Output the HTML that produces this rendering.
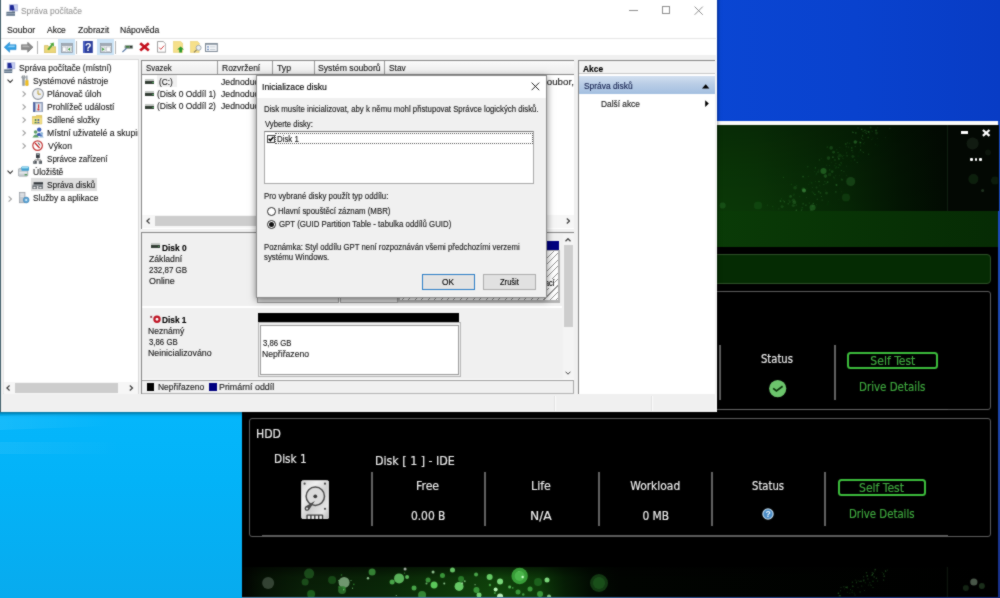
<!DOCTYPE html>
<html lang="cs"><head><meta charset="utf-8"><title>Správa počítače</title>
<style>
html,body{margin:0;padding:0}
body{width:1000px;height:598px;overflow:hidden;position:relative;background:#04b4f9;font-family:"Liberation Sans",sans-serif}
.a{position:absolute}
#win,#app{filter:url(#soft)}
.layer{position:absolute;left:0;top:0;width:1000px;height:598px}
.t{position:absolute;white-space:nowrap;line-height:1;transform-origin:0 50%}
#win .t{-webkit-text-stroke:.14px currentColor}
#app .t{-webkit-text-stroke:.15px currentColor}
.sep{position:absolute;width:2px;background:#626262}
</style></head><body>
<svg width="0" height="0" style="position:absolute"><defs><filter id="soft" x="0" y="0" width="100%" height="100%" color-interpolation-filters="sRGB"><feConvolveMatrix order="3" kernelMatrix="1 2 1 2 16 2 1 2 1" divisor="28" edgeMode="duplicate" preserveAlpha="false"/></filter></defs></svg>

<!-- ================= desktop background ================= -->
<div class="layer" id="bg">
 <div class="a" style="left:0;top:400px;width:244px;height:198px;background:linear-gradient(180deg,#05b7fc 0%,#03b3f8 40%,#08abee 100%)"></div>
 <div class="a" style="left:0;top:414px;width:110px;height:14px;background:linear-gradient(90deg,rgba(255,255,255,.07),rgba(255,255,255,0));transform:skewY(-2deg)"></div>
 <div class="a" style="left:0;top:442px;width:120px;height:12px;background:linear-gradient(90deg,rgba(255,255,255,.06),rgba(255,255,255,0))"></div>
 <div class="a" style="left:710px;top:0;width:290px;height:130px;background:linear-gradient(90deg,#0a46d3 0%,#0942ce 50%,#083cc5 100%)"></div>
 <div class="a" style="left:996px;top:121px;width:4px;height:477px;background:linear-gradient(180deg,#1a4cc0,#1c46ac 60%,#182f88)"></div>
 <div class="a" style="left:242px;top:594px;width:758px;height:4px;background:linear-gradient(90deg,#5a86ad 0%,#4f7aa6 40%,#2f4f90 60%,#1a2f80 100%)"></div>
</div>

<!-- ================= dark SSD toolbox app ================= -->
<div class="layer" id="app">
 <div class="a" style="left:242px;top:121px;width:756px;height:475.7px;background:#000"></div>
 <div class="a" style="left:242px;top:121px;width:756px;height:4.4px;background:#fbfbfb"></div>
 <!-- header -->
 <div class="a" style="left:242px;top:125px;width:756px;height:86px;background:linear-gradient(180deg,rgba(0,0,0,.22) 0%,rgba(0,0,0,.08) 55%,rgba(0,0,0,0) 100%),linear-gradient(90deg,#0b3b08 0%,#0a3907 62%,#0a3507 68%,#082d06 74%,#062405 80.5%,#031503 87%,#020b02 93%,#010601 100%)"></div>
 <div class="a" style="left:947px;top:125px;width:51px;height:86px;background:#030803;border-left:1px solid #0f1f10"></div>
 <svg class="a" style="left:242px;top:125.5px" width="756" height="86" viewBox="0 0 756 86"><defs><filter id="bl2" x="-5%" y="-10%" width="110%" height="120%"><feGaussianBlur stdDeviation=".45"/></filter></defs><g filter="url(#bl2)"><circle cx="581.5" cy="45.1" r="3" fill="#2f7a2f" fill-opacity="0.6"/><circle cx="608.7" cy="55.5" r="4.5" fill="#1f5a1f" fill-opacity="0.55"/><circle cx="562.0" cy="64.5" r="2" fill="#3f8a3f" fill-opacity="0.7"/><circle cx="480.6" cy="79.5" r="3" fill="#1f5a1f" fill-opacity="0.7"/><circle cx="516.0" cy="79.5" r="4" fill="#164f12" fill-opacity="0.6"/><circle cx="570.6" cy="81.5" r="3" fill="#2a6a2a" fill-opacity="0.6"/><circle cx="604.0" cy="71.5" r="4" fill="#124410" fill-opacity="0.6"/><circle cx="730.6" cy="17.5" r="6" fill="#2a3a2a" fill-opacity="0.4"/><circle cx="731.4" cy="53.1" r="5" fill="#1a3a1a" fill-opacity="0.45"/><circle cx="740.6" cy="64.5" r="1.5" fill="#3a5a3a" fill-opacity="0.5"/><circle cx="753.0" cy="54.5" r="4" fill="#1a3a1a" fill-opacity="0.4"/><circle cx="746.0" cy="26.5" r="3" fill="#141f14" fill-opacity="0.5"/><circle cx="634.0" cy="4.5" r="0.9" fill="#358535" fill-opacity="0.43"/><circle cx="581.8" cy="58.6" r="0.7" fill="#358535" fill-opacity="0.3"/><circle cx="594.5" cy="59.0" r="0.9" fill="#3d8f3d" fill-opacity="0.46"/><circle cx="575.3" cy="73.3" r="0.4" fill="#358535" fill-opacity="0.23"/><circle cx="596.9" cy="32.9" r="0.9" fill="#358535" fill-opacity="0.37"/><circle cx="573.4" cy="42.0" r="0.7" fill="#225f22" fill-opacity="0.48"/><circle cx="563.9" cy="79.1" r="0.7" fill="#3d8f3d" fill-opacity="0.5"/><circle cx="630.2" cy="5.3" r="0.5" fill="#2a702a" fill-opacity="0.41"/><circle cx="594.9" cy="23.7" r="0.5" fill="#2a702a" fill-opacity="0.37"/><circle cx="596.3" cy="41.5" r="0.7" fill="#225f22" fill-opacity="0.45"/><circle cx="591.6" cy="26.2" r="1.4" fill="#225f22" fill-opacity="0.54"/><circle cx="570.8" cy="80.6" r="0.7" fill="#225f22" fill-opacity="0.34"/><circle cx="561.2" cy="77.7" r="0.9" fill="#225f22" fill-opacity="0.53"/><circle cx="624.4" cy="7.5" r="0.6" fill="#358535" fill-opacity="0.37"/><circle cx="552.4" cy="76.4" r="1.8" fill="#3d8f3d" fill-opacity="0.31"/><circle cx="615.4" cy="15.4" r="0.4" fill="#225f22" fill-opacity="0.46"/><circle cx="585.9" cy="78.1" r="0.6" fill="#225f22" fill-opacity="0.33"/><circle cx="612.8" cy="33.9" r="0.7" fill="#225f22" fill-opacity="0.5"/><circle cx="621.3" cy="26.2" r="0.5" fill="#358535" fill-opacity="0.54"/><circle cx="587.7" cy="43.9" r="0.7" fill="#2a702a" fill-opacity="0.48"/><circle cx="604.7" cy="49.2" r="0.4" fill="#2a702a" fill-opacity="0.53"/><circle cx="592.9" cy="34.0" r="0.7" fill="#2a702a" fill-opacity="0.52"/><circle cx="591.7" cy="50.9" r="0.6" fill="#225f22" fill-opacity="0.34"/><circle cx="597.8" cy="21.4" r="0.5" fill="#2a702a" fill-opacity="0.27"/><circle cx="546.3" cy="77.6" r="0.7" fill="#3d8f3d" fill-opacity="0.25"/><circle cx="622.0" cy="18.8" r="0.5" fill="#225f22" fill-opacity="0.29"/><circle cx="599.4" cy="44.6" r="0.7" fill="#358535" fill-opacity="0.33"/><circle cx="610.8" cy="30.5" r="1.4" fill="#358535" fill-opacity="0.23"/><circle cx="541.6" cy="80.6" r="0.6" fill="#2a702a" fill-opacity="0.24"/><circle cx="597.8" cy="29.4" r="1.8" fill="#2a702a" fill-opacity="0.23"/><circle cx="571.3" cy="77.4" r="0.7" fill="#358535" fill-opacity="0.47"/><circle cx="626.7" cy="28.3" r="0.7" fill="#2a702a" fill-opacity="0.39"/><circle cx="547.8" cy="76.0" r="0.6" fill="#3d8f3d" fill-opacity="0.44"/><circle cx="630.8" cy="12.1" r="0.7" fill="#225f22" fill-opacity="0.28"/><circle cx="592.1" cy="51.8" r="0.6" fill="#358535" fill-opacity="0.37"/><circle cx="612.2" cy="30.6" r="0.6" fill="#2a702a" fill-opacity="0.21"/><circle cx="584.7" cy="39.1" r="0.7" fill="#225f22" fill-opacity="0.28"/><circle cx="624.1" cy="7.0" r="0.5" fill="#2a702a" fill-opacity="0.48"/><circle cx="561.3" cy="63.2" r="1.8" fill="#358535" fill-opacity="0.28"/><circle cx="613.3" cy="16.0" r="1.8" fill="#358535" fill-opacity="0.51"/><circle cx="594.5" cy="41.0" r="0.7" fill="#2a702a" fill-opacity="0.27"/><circle cx="554.3" cy="84.3" r="0.7" fill="#3d8f3d" fill-opacity="0.51"/><circle cx="553.1" cy="61.8" r="1.8" fill="#358535" fill-opacity="0.26"/><circle cx="554.2" cy="79.0" r="0.7" fill="#225f22" fill-opacity="0.54"/><circle cx="598.1" cy="39.1" r="0.7" fill="#2a702a" fill-opacity="0.4"/><circle cx="551.8" cy="69.7" r="0.7" fill="#2a702a" fill-opacity="0.22"/><circle cx="574.7" cy="47.2" r="0.6" fill="#3d8f3d" fill-opacity="0.21"/><circle cx="604.2" cy="29.1" r="0.4" fill="#3d8f3d" fill-opacity="0.22"/><circle cx="551.1" cy="79.6" r="1.4" fill="#225f22" fill-opacity="0.46"/><circle cx="584.2" cy="57.6" r="0.9" fill="#2a702a" fill-opacity="0.21"/><circle cx="589.1" cy="21.9" r="1.8" fill="#225f22" fill-opacity="0.52"/><circle cx="575.2" cy="73.2" r="0.6" fill="#358535" fill-opacity="0.41"/><circle cx="600.1" cy="31.8" r="0.4" fill="#358535" fill-opacity="0.34"/><circle cx="607.5" cy="17.3" r="0.9" fill="#225f22" fill-opacity="0.26"/><circle cx="599.3" cy="37.7" r="0.5" fill="#2a702a" fill-opacity="0.35"/><circle cx="559.4" cy="84.1" r="0.7" fill="#358535" fill-opacity="0.46"/><circle cx="557.8" cy="70.7" r="0.6" fill="#225f22" fill-opacity="0.4"/><circle cx="599.9" cy="29.5" r="0.5" fill="#358535" fill-opacity="0.25"/><circle cx="547.0" cy="74.0" r="0.5" fill="#358535" fill-opacity="0.43"/><circle cx="620.6" cy="9.3" r="0.5" fill="#3d8f3d" fill-opacity="0.52"/><circle cx="626.7" cy="5.9" r="0.9" fill="#358535" fill-opacity="0.53"/><circle cx="608.0" cy="28.9" r="0.4" fill="#2a702a" fill-opacity="0.42"/><circle cx="570.7" cy="61.7" r="0.4" fill="#358535" fill-opacity="0.55"/><circle cx="570.2" cy="66.0" r="0.9" fill="#225f22" fill-opacity="0.23"/><circle cx="619.8" cy="3.3" r="0.7" fill="#358535" fill-opacity="0.42"/><circle cx="629.9" cy="13.5" r="0.6" fill="#225f22" fill-opacity="0.35"/><circle cx="615.1" cy="36.5" r="0.5" fill="#3d8f3d" fill-opacity="0.45"/><circle cx="633.5" cy="18.1" r="0.4" fill="#3d8f3d" fill-opacity="0.4"/><circle cx="601.9" cy="29.4" r="0.5" fill="#3d8f3d" fill-opacity="0.23"/><circle cx="569.8" cy="56.8" r="0.6" fill="#358535" fill-opacity="0.38"/><circle cx="568.6" cy="82.1" r="0.5" fill="#225f22" fill-opacity="0.24"/><circle cx="570.8" cy="80.0" r="0.7" fill="#2a702a" fill-opacity="0.52"/><circle cx="583.4" cy="51.1" r="0.5" fill="#3d8f3d" fill-opacity="0.42"/><circle cx="603.7" cy="18.0" r="0.9" fill="#358535" fill-opacity="0.33"/><circle cx="621.2" cy="17.4" r="0.4" fill="#2a702a" fill-opacity="0.43"/><circle cx="596.0" cy="30.9" r="0.6" fill="#3d8f3d" fill-opacity="0.31"/><circle cx="603.7" cy="24.1" r="0.5" fill="#2a702a" fill-opacity="0.2"/><circle cx="590.2" cy="46.2" r="0.7" fill="#2a702a" fill-opacity="0.22"/><circle cx="589.4" cy="36.4" r="0.4" fill="#2a702a" fill-opacity="0.42"/><circle cx="601.9" cy="45.6" r="0.5" fill="#2a702a" fill-opacity="0.5"/><circle cx="546.1" cy="77.9" r="0.7" fill="#225f22" fill-opacity="0.53"/><circle cx="569.2" cy="84.4" r="1.4" fill="#225f22" fill-opacity="0.41"/><circle cx="604.6" cy="26.9" r="0.7" fill="#358535" fill-opacity="0.29"/><circle cx="531.6" cy="83.1" r="0.5" fill="#225f22" fill-opacity="0.33"/><circle cx="604.3" cy="20.7" r="0.6" fill="#3d8f3d" fill-opacity="0.26"/><circle cx="579.4" cy="70.5" r="0.6" fill="#3d8f3d" fill-opacity="0.39"/><circle cx="587.6" cy="48.5" r="1.8" fill="#225f22" fill-opacity="0.29"/><circle cx="536.8" cy="82.9" r="0.7" fill="#358535" fill-opacity="0.26"/><circle cx="593.8" cy="65.9" r="0.9" fill="#225f22" fill-opacity="0.46"/><circle cx="571.7" cy="67.3" r="0.7" fill="#225f22" fill-opacity="0.51"/><circle cx="621.9" cy="17.5" r="0.4" fill="#225f22" fill-opacity="0.31"/><circle cx="576.4" cy="44.1" r="0.5" fill="#358535" fill-opacity="0.33"/><circle cx="564.4" cy="71.5" r="0.5" fill="#3d8f3d" fill-opacity="0.23"/><circle cx="593.8" cy="49.7" r="0.6" fill="#2a702a" fill-opacity="0.22"/><circle cx="578.5" cy="66.9" r="0.9" fill="#3d8f3d" fill-opacity="0.29"/><circle cx="574.4" cy="78.6" r="0.5" fill="#358535" fill-opacity="0.22"/><circle cx="584.5" cy="67.1" r="1.4" fill="#3d8f3d" fill-opacity="0.27"/><circle cx="563.5" cy="51.9" r="0.5" fill="#225f22" fill-opacity="0.22"/><circle cx="599.7" cy="53.5" r="0.9" fill="#2a702a" fill-opacity="0.33"/><circle cx="599.0" cy="36.8" r="0.5" fill="#358535" fill-opacity="0.55"/><circle cx="606.6" cy="21.1" r="0.6" fill="#2a702a" fill-opacity="0.29"/><circle cx="566.4" cy="50.3" r="0.6" fill="#225f22" fill-opacity="0.42"/><circle cx="629.4" cy="4.7" r="0.5" fill="#225f22" fill-opacity="0.27"/><circle cx="590.9" cy="31.2" r="0.9" fill="#3d8f3d" fill-opacity="0.37"/><circle cx="590.2" cy="45.6" r="1.4" fill="#225f22" fill-opacity="0.48"/><circle cx="587.3" cy="31.1" r="0.4" fill="#2a702a" fill-opacity="0.24"/><circle cx="598.0" cy="62.7" r="0.4" fill="#2a702a" fill-opacity="0.25"/><circle cx="582.8" cy="55.6" r="0.9" fill="#225f22" fill-opacity="0.27"/><circle cx="530.8" cy="80.4" r="0.7" fill="#2a702a" fill-opacity="0.29"/><circle cx="635.6" cy="19.8" r="0.4" fill="#225f22" fill-opacity="0.37"/><circle cx="623.2" cy="6.2" r="0.6" fill="#3d8f3d" fill-opacity="0.29"/><circle cx="605.1" cy="29.8" r="0.6" fill="#3d8f3d" fill-opacity="0.5"/><circle cx="592.9" cy="53.9" r="0.4" fill="#225f22" fill-opacity="0.36"/><circle cx="616.0" cy="2.0" r="0.9" fill="#225f22" fill-opacity="0.26"/><circle cx="634.5" cy="7.1" r="1.4" fill="#225f22" fill-opacity="0.37"/><circle cx="592.8" cy="39.8" r="0.6" fill="#225f22" fill-opacity="0.4"/><circle cx="626.0" cy="5.3" r="0.5" fill="#2a702a" fill-opacity="0.53"/><circle cx="526.3" cy="66.4" r="0.4" fill="#225f22" fill-opacity="0.32"/><circle cx="580.6" cy="39.8" r="0.4" fill="#225f22" fill-opacity="0.27"/><circle cx="618.4" cy="20.1" r="0.5" fill="#3d8f3d" fill-opacity="0.24"/><circle cx="576.1" cy="45.9" r="0.9" fill="#225f22" fill-opacity="0.38"/><circle cx="542.3" cy="75.8" r="0.7" fill="#3d8f3d" fill-opacity="0.44"/><circle cx="610.9" cy="25.9" r="0.5" fill="#358535" fill-opacity="0.29"/><circle cx="577.8" cy="59.7" r="0.5" fill="#225f22" fill-opacity="0.41"/><circle cx="604.6" cy="40.1" r="0.4" fill="#358535" fill-opacity="0.54"/><circle cx="605.4" cy="16.8" r="0.6" fill="#3d8f3d" fill-opacity="0.3"/><circle cx="627.6" cy="8.1" r="0.7" fill="#2a702a" fill-opacity="0.2"/><circle cx="551.5" cy="74.2" r="1.8" fill="#3d8f3d" fill-opacity="0.21"/><circle cx="609.8" cy="21.9" r="0.7" fill="#3d8f3d" fill-opacity="0.5"/><circle cx="561.1" cy="50.6" r="0.9" fill="#358535" fill-opacity="0.44"/><circle cx="567.9" cy="56.0" r="0.4" fill="#3d8f3d" fill-opacity="0.28"/><circle cx="596.8" cy="32.2" r="0.7" fill="#3d8f3d" fill-opacity="0.21"/><circle cx="539.5" cy="72.8" r="0.6" fill="#2a702a" fill-opacity="0.34"/><circle cx="593.9" cy="42.0" r="0.5" fill="#358535" fill-opacity="0.38"/><circle cx="613.7" cy="6.8" r="0.9" fill="#2a702a" fill-opacity="0.42"/><circle cx="548.6" cy="70.4" r="1.4" fill="#358535" fill-opacity="0.34"/><circle cx="596.7" cy="73.4" r="0.4" fill="#225f22" fill-opacity="0.3"/><circle cx="609.2" cy="34.8" r="0.6" fill="#225f22" fill-opacity="0.24"/><circle cx="586.5" cy="32.1" r="1.8" fill="#3d8f3d" fill-opacity="0.27"/><circle cx="622.9" cy="4.3" r="0.7" fill="#358535" fill-opacity="0.49"/><circle cx="611.0" cy="6.4" r="0.7" fill="#3d8f3d" fill-opacity="0.55"/><circle cx="554.8" cy="59.5" r="0.5" fill="#225f22" fill-opacity="0.45"/><circle cx="594.1" cy="58.3" r="0.6" fill="#225f22" fill-opacity="0.29"/><circle cx="596.0" cy="26.7" r="0.6" fill="#358535" fill-opacity="0.53"/><circle cx="586.2" cy="75.8" r="0.5" fill="#225f22" fill-opacity="0.42"/><circle cx="647.8" cy="2.5" r="0.6" fill="#2a702a" fill-opacity="0.4"/><circle cx="567.2" cy="77.1" r="0.5" fill="#3d8f3d" fill-opacity="0.48"/><circle cx="626.4" cy="11.3" r="0.9" fill="#225f22" fill-opacity="0.27"/><circle cx="553.2" cy="58.1" r="0.4" fill="#2a702a" fill-opacity="0.29"/><circle cx="618.6" cy="24.0" r="0.7" fill="#358535" fill-opacity="0.45"/><circle cx="617.2" cy="26.1" r="0.5" fill="#225f22" fill-opacity="0.36"/><circle cx="573.3" cy="41.7" r="0.7" fill="#2a702a" fill-opacity="0.26"/><circle cx="600.2" cy="30.5" r="0.6" fill="#2a702a" fill-opacity="0.38"/><circle cx="593.6" cy="41.1" r="0.5" fill="#225f22" fill-opacity="0.23"/><circle cx="565.0" cy="62.4" r="0.5" fill="#225f22" fill-opacity="0.35"/><circle cx="577.4" cy="33.9" r="0.7" fill="#3d8f3d" fill-opacity="0.32"/><circle cx="560.2" cy="81.5" r="0.7" fill="#2a702a" fill-opacity="0.32"/><circle cx="601.0" cy="32.5" r="0.4" fill="#3d8f3d" fill-opacity="0.45"/><circle cx="553.9" cy="75.4" r="0.4" fill="#2a702a" fill-opacity="0.27"/><circle cx="538.5" cy="75.1" r="0.9" fill="#3d8f3d" fill-opacity="0.42"/><circle cx="574.1" cy="48.7" r="0.5" fill="#2a702a" fill-opacity="0.43"/><circle cx="593.9" cy="37.6" r="0.4" fill="#3d8f3d" fill-opacity="0.47"/><circle cx="548.1" cy="75.0" r="0.6" fill="#225f22" fill-opacity="0.5"/><circle cx="617.6" cy="16.4" r="0.9" fill="#2a702a" fill-opacity="0.37"/><circle cx="597.2" cy="38.7" r="0.7" fill="#3d8f3d" fill-opacity="0.22"/><circle cx="541.4" cy="51.3" r="0.5" fill="#3d8f3d" fill-opacity="0.47"/><circle cx="597.6" cy="49.4" r="0.4" fill="#3d8f3d" fill-opacity="0.2"/><circle cx="599.3" cy="65.8" r="0.4" fill="#358535" fill-opacity="0.37"/><circle cx="599.0" cy="22.1" r="0.4" fill="#225f22" fill-opacity="0.47"/><circle cx="585.6" cy="56.1" r="0.9" fill="#3d8f3d" fill-opacity="0.36"/><circle cx="574.5" cy="61.5" r="0.9" fill="#2a702a" fill-opacity="0.34"/><circle cx="585.4" cy="21.1" r="0.9" fill="#2a702a" fill-opacity="0.31"/><circle cx="550.8" cy="76.7" r="0.4" fill="#225f22" fill-opacity="0.53"/><circle cx="620.7" cy="10.1" r="0.7" fill="#225f22" fill-opacity="0.47"/><circle cx="583.4" cy="50.0" r="1.8" fill="#2a702a" fill-opacity="0.49"/><circle cx="577.0" cy="55.5" r="0.7" fill="#3d8f3d" fill-opacity="0.44"/><circle cx="599.3" cy="47.2" r="0.4" fill="#225f22" fill-opacity="0.29"/><circle cx="579.4" cy="32.6" r="0.4" fill="#225f22" fill-opacity="0.49"/><circle cx="576.7" cy="65.6" r="0.9" fill="#3d8f3d" fill-opacity="0.32"/><circle cx="610.7" cy="5.4" r="0.5" fill="#225f22" fill-opacity="0.41"/><circle cx="566.9" cy="58.7" r="0.4" fill="#3d8f3d" fill-opacity="0.36"/><circle cx="628.6" cy="1.5" r="0.9" fill="#225f22" fill-opacity="0.51"/><circle cx="572.9" cy="45.6" r="0.5" fill="#2a702a" fill-opacity="0.26"/><circle cx="562.5" cy="64.0" r="0.9" fill="#358535" fill-opacity="0.29"/><circle cx="525.4" cy="79.3" r="0.7" fill="#2a702a" fill-opacity="0.25"/><circle cx="573.7" cy="55.3" r="0.4" fill="#358535" fill-opacity="0.55"/><circle cx="541.3" cy="74.6" r="0.6" fill="#3d8f3d" fill-opacity="0.23"/><circle cx="581.8" cy="35.5" r="0.4" fill="#225f22" fill-opacity="0.27"/><circle cx="618.6" cy="16.5" r="0.7" fill="#3d8f3d" fill-opacity="0.53"/><circle cx="574.8" cy="80.0" r="0.4" fill="#2a702a" fill-opacity="0.29"/><circle cx="565.8" cy="40.7" r="0.7" fill="#358535" fill-opacity="0.36"/><circle cx="643.7" cy="11.4" r="0.4" fill="#225f22" fill-opacity="0.53"/><circle cx="624.4" cy="5.2" r="0.6" fill="#3d8f3d" fill-opacity="0.22"/><circle cx="619.7" cy="3.3" r="0.6" fill="#3d8f3d" fill-opacity="0.47"/><circle cx="619.6" cy="12.2" r="0.7" fill="#3d8f3d" fill-opacity="0.26"/><circle cx="620.1" cy="25.5" r="0.5" fill="#2a702a" fill-opacity="0.25"/><circle cx="580.1" cy="73.9" r="0.5" fill="#3d8f3d" fill-opacity="0.54"/><circle cx="552.7" cy="79.8" r="0.6" fill="#225f22" fill-opacity="0.49"/><circle cx="587.5" cy="39.5" r="0.4" fill="#358535" fill-opacity="0.45"/><circle cx="600.3" cy="53.9" r="0.7" fill="#358535" fill-opacity="0.25"/><circle cx="613.3" cy="20.5" r="0.7" fill="#2a702a" fill-opacity="0.31"/><circle cx="635.4" cy="1.7" r="0.7" fill="#225f22" fill-opacity="0.24"/><circle cx="583.3" cy="63.9" r="0.5" fill="#358535" fill-opacity="0.23"/><circle cx="609.9" cy="24.3" r="0.6" fill="#358535" fill-opacity="0.54"/><circle cx="635.3" cy="12.5" r="0.5" fill="#225f22" fill-opacity="0.35"/><circle cx="560.0" cy="83.1" r="0.5" fill="#358535" fill-opacity="0.45"/><circle cx="618.2" cy="18.0" r="0.7" fill="#225f22" fill-opacity="0.26"/><circle cx="614.1" cy="7.2" r="0.6" fill="#358535" fill-opacity="0.2"/><circle cx="549.5" cy="58.4" r="0.9" fill="#225f22" fill-opacity="0.32"/><circle cx="572.9" cy="68.6" r="0.7" fill="#358535" fill-opacity="0.51"/><circle cx="616.1" cy="30.1" r="0.5" fill="#225f22" fill-opacity="0.4"/><circle cx="540.0" cy="80.7" r="1.4" fill="#2a702a" fill-opacity="0.32"/><circle cx="620.8" cy="13.6" r="0.7" fill="#2a702a" fill-opacity="0.3"/><circle cx="621.1" cy="5.3" r="0.9" fill="#358535" fill-opacity="0.21"/><circle cx="622.5" cy="16.6" r="0.4" fill="#358535" fill-opacity="0.29"/><circle cx="552.0" cy="68.3" r="0.7" fill="#2a702a" fill-opacity="0.32"/><circle cx="626.1" cy="11.4" r="0.9" fill="#225f22" fill-opacity="0.24"/></g></svg>
 <div class="a" style="left:960.6px;top:131.4px;width:7.2px;height:3px;background:#fff"></div>
 <svg class="a" style="left:980px;top:127px" width="12" height="12" viewBox="0 0 12 12"><path d="M2.9 3 L9.5 8.8 M9.5 3 L2.9 8.8" stroke="#fff" stroke-width="2.3" fill="none"/></svg>
 <div class="a" style="left:970.4px;top:158px;width:2.5px;height:2.5px;border-radius:40%;background:#fff"></div>
 <div class="a" style="left:974.8px;top:158px;width:2.5px;height:2.5px;border-radius:40%;background:#fff"></div>
 <div class="a" style="left:979.2px;top:158px;width:2.5px;height:2.5px;border-radius:40%;background:#fff"></div>
 <!-- green band -->
 <div class="a" style="left:242px;top:211px;width:756px;height:36px;background:linear-gradient(90deg,#0c4209 0%,#0a3c07 60%,#062b04 100%)"></div>
 <!-- rounded box -->
 <div class="a" style="left:250px;top:254px;width:741px;height:30px;background:#052b03;border:1px solid #2c4f26;border-radius:4px;box-sizing:border-box"></div>
 <!-- panel 1 -->
 <div class="a" style="left:249px;top:291px;width:742px;height:119px;border:1px solid #5c5c5c;border-radius:3px;box-sizing:border-box"></div>
 <div class="a" style="left:700px;top:408.6px;width:248px;height:1.6px;background:#666"></div>
 <div class="sep" style="left:719px;top:345px;height:55px"></div>
 <div class="sep" style="left:834px;top:345px;height:55px"></div>
 <div class="a" style="left:847.2px;top:352px;width:91px;height:16.6px;border:2px solid #3cbc3c;border-radius:3.5px;box-sizing:border-box"></div>
 <svg class="a" style="left:768px;top:379px" width="20" height="20" viewBox="0 0 20 20"><circle cx="9.7" cy="9.6" r="8.6" fill="#6cc56c"/><path d="M5.2 9.3 L8.4 12 L14.6 7.3" stroke="#0b350b" stroke-width="1.7" fill="none"/></svg>
 <!-- panel 2 -->
 <div class="a" style="left:249px;top:418px;width:742px;height:119px;border:1px solid #5c5c5c;border-radius:3px;box-sizing:border-box"></div>
 <div class="a" style="left:262px;top:535px;width:686px;height:1.6px;background:#5c5c5c"></div>
 <div class="sep" style="left:371px;top:472px;height:54px"></div>
 <div class="sep" style="left:484px;top:472px;height:54px"></div>
 <div class="sep" style="left:598px;top:472px;height:54px"></div>
 <div class="sep" style="left:711px;top:472px;height:54px"></div>
 <div class="sep" style="left:824px;top:472px;height:54px"></div>
 <div class="a" style="left:837.8px;top:479px;width:88.4px;height:16.8px;border:2px solid #3cbc3c;border-radius:3.5px;box-sizing:border-box"></div>
 <svg class="a" style="left:300.7px;top:479.6px" width="28.2" height="39.4" viewBox="0 0 28.2 39.4"><defs><linearGradient id="hg" x1="0" y1="0" x2="1" y2="1"><stop offset="0" stop-color="#d4d4d4"/><stop offset=".3" stop-color="#efefef"/><stop offset=".55" stop-color="#d0d0d0"/><stop offset=".8" stop-color="#e6e6e6"/><stop offset="1" stop-color="#b4b4b4"/></linearGradient></defs>
<rect x="0.4" y="0.4" width="27.4" height="38.6" rx="2.2" fill="url(#hg)" stroke="#f4f4f4" stroke-width=".7"/>
<circle cx="14.3" cy="16.3" r="9.2" fill="#dcdcdc" stroke="#4c4c4c" stroke-width="1.5"/>
<circle cx="14.3" cy="16.3" r="1.9" fill="#3c3c3c"/>
<path d="M13.9 20.9 L8 30 Q6 31.6 4.2 30.2 Q3 28.4 4.4 26.6 Z" fill="#4a4a4a"/>
<circle cx="6" cy="28.6" r="1.1" fill="#d8d8d8"/>
<circle cx="3.6" cy="3.7" r="1.1" fill="#4a4a4a"/><circle cx="24" cy="3.7" r="1.1" fill="#4a4a4a"/><circle cx="24" cy="28.8" r="1.1" fill="#4a4a4a"/>
<path d="M5.4 39 L5.4 35.6 Q5.4 34.4 6.6 34.4 L21 34.4 Q22.2 34.4 22.2 35.6 L22.2 39Z" fill="#3c3c3c"/>
<rect x="6.7" y="35.7" width="2.5" height="3.3" fill="#e8e8e8"/><rect x="10.6" y="35.7" width="2.5" height="3.3" fill="#e8e8e8"/><rect x="14.5" y="35.7" width="2.5" height="3.3" fill="#e8e8e8"/><rect x="18.4" y="35.7" width="2.5" height="3.3" fill="#e8e8e8"/></svg>
 <svg class="a" style="left:762.3px;top:508.4px" width="12" height="12" viewBox="0 0 12 12"><circle cx="6" cy="6" r="5.1" fill="#4a8cc6" stroke="#b4d2e8" stroke-width="1.3"/><text x="6.1" y="9" font-size="8.6" font-weight="bold" fill="#e8f4fc" text-anchor="middle" font-family="Liberation Sans,sans-serif">?</text></svg>
 <svg class="a" style="left:242px;top:567px" width="756" height="29.7" viewBox="0 0 756 29.7"><defs><filter id="bl" x="-5%" y="-20%" width="110%" height="140%"><feGaussianBlur stdDeviation=".55"/></filter><linearGradient id="bg1" x1="0" y1="0" x2="1" y2="0"><stop offset="0" stop-color="#010301"/><stop offset=".026" stop-color="#051204"/><stop offset=".077" stop-color="#091f07"/><stop offset=".18" stop-color="#0a2808"/><stop offset=".26" stop-color="#0d3609"/><stop offset=".34" stop-color="#11480c"/><stop offset=".394" stop-color="#0e3d0a"/><stop offset=".427" stop-color="#061f05"/><stop offset=".46" stop-color="#020c02"/><stop offset=".5" stop-color="#010401"/><stop offset="1" stop-color="#000"/></linearGradient><linearGradient id="bg2" x1="0" y1="0" x2="0" y2="1"><stop offset="0" stop-color="#000" stop-opacity=".55"/><stop offset=".35" stop-color="#000" stop-opacity=".12"/><stop offset="1" stop-color="#000" stop-opacity="0"/></linearGradient></defs><rect x="0" y="0" width="756" height="30" fill="url(#bg1)"/><rect x="0" y="0" width="756" height="30" fill="url(#bg2)"/><rect x="705" y="0" width=".8" height="30" fill="#142014"/><g filter="url(#bl)"><circle cx="26.0" cy="16.0" r="6" fill="#5a6a5a" fill-opacity="0.55"/><circle cx="67.0" cy="6.6" r="5" fill="#2a6a2a" fill-opacity="0.6"/><circle cx="63.0" cy="15.0" r="3.5" fill="#2a6a2a" fill-opacity="0.6"/><circle cx="90.0" cy="13.0" r="4" fill="#1f5a1f" fill-opacity="0.7"/><circle cx="102.0" cy="15.4" r="5.5" fill="#8ab48a" fill-opacity="0.8"/><circle cx="100.0" cy="23.0" r="4" fill="#2f7a2f" fill-opacity="0.8"/><circle cx="69.0" cy="27.0" r="4" fill="#1f6a1f" fill-opacity="0.8"/><circle cx="130.0" cy="5.0" r="3.5" fill="#3f9a3f" fill-opacity="0.8"/><circle cx="157.0" cy="11.4" r="5" fill="#63c063" fill-opacity="0.9"/><circle cx="150.0" cy="15.0" r="2.5" fill="#4fb04f" fill-opacity="0.9"/><circle cx="165.0" cy="10.0" r="2" fill="#5fc05f" fill-opacity="0.9"/><circle cx="163.0" cy="2.0" r="1.5" fill="#b0b8b0" fill-opacity="0.9"/><circle cx="192.0" cy="18.0" r="3.5" fill="#5fd05f" fill-opacity="0.95"/><circle cx="186.0" cy="13.0" r="2.5" fill="#3f9a3f" fill-opacity="0.9"/><circle cx="172.0" cy="21.0" r="2.5" fill="#4fb04f" fill-opacity="0.9"/><circle cx="180.0" cy="28.0" r="4" fill="#3f9a3f" fill-opacity="0.8"/><circle cx="191.0" cy="5.0" r="1.5" fill="#99cc99" fill-opacity="0.9"/><circle cx="200.4" cy="8.4" r="2.5" fill="#3fa03f" fill-opacity="0.9"/><circle cx="210.4" cy="3.0" r="2.5" fill="#6fd06f" fill-opacity="0.9"/><circle cx="217.0" cy="19.4" r="4.5" fill="#6fd86f" fill-opacity="0.9"/><circle cx="219.0" cy="12.0" r="3" fill="#2f8a2f" fill-opacity="0.8"/><circle cx="234.0" cy="7.4" r="2" fill="#4fb04f" fill-opacity="0.9"/><circle cx="234.4" cy="23.0" r="3" fill="#3fa03f" fill-opacity="0.9"/><circle cx="237.0" cy="28.0" r="2.5" fill="#7fe07f" fill-opacity="0.9"/><circle cx="247.6" cy="10.0" r="3" fill="#6fd86f" fill-opacity="0.9"/><circle cx="258.0" cy="14.6" r="3" fill="#7fe07f" fill-opacity="0.95"/><circle cx="253.6" cy="22.6" r="2" fill="#bfffbf" fill-opacity="0.95"/><circle cx="258.0" cy="29.4" r="3" fill="#ccffcc" fill-opacity="0.9"/><circle cx="267.6" cy="20.0" r="1.5" fill="#5fc05f" fill-opacity="0.9"/><circle cx="277.6" cy="9.0" r="8.2" fill="#3fae3f" fill-opacity="0.85"/><circle cx="277.6" cy="9.0" r="5" fill="#5fd05f" fill-opacity="0.5"/><circle cx="280.6" cy="10.0" r="1.2" fill="#c8ffc8" fill-opacity="1"/><circle cx="276.0" cy="25.0" r="2.5" fill="#3fa03f" fill-opacity="0.9"/><circle cx="288.0" cy="22.0" r="2.5" fill="#3fa03f" fill-opacity="0.9"/><circle cx="296.0" cy="15.0" r="4" fill="#1f6a1f" fill-opacity="0.8"/><circle cx="305.0" cy="13.0" r="2.5" fill="#7fe07f" fill-opacity="0.95"/><circle cx="298.0" cy="27.0" r="3" fill="#3fa03f" fill-opacity="0.9"/><circle cx="307.0" cy="29.4" r="2" fill="#8fd08f" fill-opacity="0.9"/><circle cx="357.0" cy="16.0" r="9" fill="#1f5f1f" fill-opacity="0.55"/><circle cx="357.0" cy="16.0" r="6" fill="#2a7a2a" fill-opacity="0.35"/><circle cx="732.0" cy="15.0" r="3.6" fill="#5a6a5a" fill-opacity="0.8"/><circle cx="740.0" cy="19.0" r="3" fill="#1f3a1f" fill-opacity="0.8"/><circle cx="724.0" cy="21.0" r="3" fill="#162a16" fill-opacity="0.8"/><circle cx="162.5" cy="6.1" r="0.6" fill="#4fb04f" fill-opacity="0.8"/><circle cx="276.9" cy="4.5" r="0.6" fill="#7fd07f" fill-opacity="0.8"/><circle cx="96.6" cy="13.7" r="0.6" fill="#7fd07f" fill-opacity="0.8"/><circle cx="108.9" cy="13.5" r="0.6" fill="#7fd07f" fill-opacity="0.8"/><circle cx="233.0" cy="17.7" r="0.6" fill="#a8e0a8" fill-opacity="0.8"/><circle cx="99.4" cy="8.0" r="0.8" fill="#2f8a2f" fill-opacity="0.8"/><circle cx="184.4" cy="16.6" r="1" fill="#7fd07f" fill-opacity="0.8"/><circle cx="111.7" cy="17.4" r="0.8" fill="#2f8a2f" fill-opacity="0.8"/><circle cx="110.4" cy="21.2" r="0.6" fill="#7fd07f" fill-opacity="0.8"/><circle cx="202.2" cy="16.4" r="1" fill="#a8e0a8" fill-opacity="0.8"/><circle cx="222.7" cy="14.2" r="1" fill="#7fd07f" fill-opacity="0.8"/><circle cx="270.7" cy="20.9" r="0.8" fill="#4fb04f" fill-opacity="0.8"/><circle cx="220.1" cy="16.2" r="1" fill="#a8e0a8" fill-opacity="0.8"/><circle cx="154.2" cy="28.5" r="0.6" fill="#a8e0a8" fill-opacity="0.8"/><circle cx="125.9" cy="11.2" r="1.2" fill="#a8e0a8" fill-opacity="0.8"/><circle cx="97.0" cy="20.0" r="1" fill="#2f8a2f" fill-opacity="0.8"/><circle cx="247.9" cy="18.0" r="1.2" fill="#4fb04f" fill-opacity="0.8"/><circle cx="281.2" cy="27.5" r="1.2" fill="#4fb04f" fill-opacity="0.8"/><circle cx="102.0" cy="20.9" r="1.2" fill="#2f8a2f" fill-opacity="0.8"/><circle cx="252.8" cy="26.0" r="1" fill="#4fb04f" fill-opacity="0.8"/><circle cx="304.3" cy="11.6" r="0.6" fill="#a8e0a8" fill-opacity="0.8"/><circle cx="101.6" cy="22.7" r="0.8" fill="#7fd07f" fill-opacity="0.8"/><circle cx="628.3" cy="17.8" r="0.5" fill="#266a26" fill-opacity="0.42"/><circle cx="605.3" cy="20.7" r="0.8" fill="#266a26" fill-opacity="0.51"/><circle cx="601.9" cy="19.7" r="0.8" fill="#2f7a2f" fill-opacity="0.3"/><circle cx="632.9" cy="4.0" r="0.5" fill="#266a26" fill-opacity="0.46"/><circle cx="625.3" cy="8.9" r="0.8" fill="#3a8a3a" fill-opacity="0.5"/><circle cx="634.6" cy="11.3" r="0.8" fill="#3a8a3a" fill-opacity="0.42"/><circle cx="610.4" cy="18.9" r="0.5" fill="#2f7a2f" fill-opacity="0.32"/><circle cx="602.6" cy="21.9" r="0.5" fill="#2f7a2f" fill-opacity="0.3"/><circle cx="598.5" cy="23.7" r="0.5" fill="#2f7a2f" fill-opacity="0.56"/><circle cx="621.7" cy="9.8" r="0.6" fill="#3a8a3a" fill-opacity="0.41"/><circle cx="622.0" cy="12.6" r="0.5" fill="#3a8a3a" fill-opacity="0.4"/><circle cx="619.9" cy="18.9" r="0.5" fill="#2f7a2f" fill-opacity="0.59"/><circle cx="617.6" cy="14.6" r="0.5" fill="#3a8a3a" fill-opacity="0.39"/><circle cx="621.9" cy="13.8" r="0.8" fill="#266a26" fill-opacity="0.57"/><circle cx="611.0" cy="19.4" r="0.8" fill="#266a26" fill-opacity="0.49"/><circle cx="635.8" cy="13.9" r="0.5" fill="#2f7a2f" fill-opacity="0.55"/><circle cx="629.5" cy="8.4" r="0.6" fill="#3a8a3a" fill-opacity="0.31"/><circle cx="596.5" cy="26.3" r="0.8" fill="#3a8a3a" fill-opacity="0.59"/><circle cx="631.1" cy="20.4" r="0.6" fill="#2f7a2f" fill-opacity="0.37"/><circle cx="604.2" cy="20.3" r="0.8" fill="#3a8a3a" fill-opacity="0.55"/><circle cx="626.4" cy="18.0" r="0.5" fill="#3a8a3a" fill-opacity="0.34"/><circle cx="623.3" cy="15.7" r="0.5" fill="#266a26" fill-opacity="0.54"/><circle cx="622.6" cy="23.5" r="0.6" fill="#266a26" fill-opacity="0.42"/><circle cx="598.4" cy="28.7" r="0.8" fill="#2f7a2f" fill-opacity="0.48"/><circle cx="628.0" cy="15.8" r="0.5" fill="#3a8a3a" fill-opacity="0.46"/><circle cx="610.4" cy="23.2" r="0.5" fill="#2f7a2f" fill-opacity="0.31"/><circle cx="610.2" cy="25.2" r="0.6" fill="#266a26" fill-opacity="0.46"/><circle cx="630.4" cy="7.6" r="0.6" fill="#3a8a3a" fill-opacity="0.48"/><circle cx="641.7" cy="7.0" r="0.8" fill="#2f7a2f" fill-opacity="0.46"/><circle cx="614.5" cy="13.9" r="0.5" fill="#3a8a3a" fill-opacity="0.3"/><circle cx="631.2" cy="6.4" r="0.8" fill="#2f7a2f" fill-opacity="0.47"/><circle cx="616.1" cy="20.3" r="0.5" fill="#3a8a3a" fill-opacity="0.32"/><circle cx="599.1" cy="20.4" r="0.6" fill="#3a8a3a" fill-opacity="0.31"/><circle cx="633.3" cy="2.6" r="0.8" fill="#3a8a3a" fill-opacity="0.45"/><circle cx="632.2" cy="9.9" r="0.6" fill="#3a8a3a" fill-opacity="0.58"/><circle cx="641.8" cy="13.0" r="0.6" fill="#3a8a3a" fill-opacity="0.57"/><circle cx="608.6" cy="22.7" r="0.6" fill="#266a26" fill-opacity="0.39"/><circle cx="630.6" cy="7.9" r="0.6" fill="#2f7a2f" fill-opacity="0.57"/><circle cx="612.2" cy="26.0" r="0.5" fill="#266a26" fill-opacity="0.56"/><circle cx="640.3" cy="5.5" r="0.6" fill="#266a26" fill-opacity="0.35"/><circle cx="626.0" cy="12.0" r="0.8" fill="#266a26" fill-opacity="0.4"/><circle cx="605.4" cy="25.3" r="0.5" fill="#266a26" fill-opacity="0.47"/><circle cx="610.5" cy="15.3" r="0.8" fill="#266a26" fill-opacity="0.45"/><circle cx="608.0" cy="26.1" r="0.5" fill="#266a26" fill-opacity="0.55"/><circle cx="642.3" cy="9.3" r="0.8" fill="#3a8a3a" fill-opacity="0.47"/><circle cx="624.6" cy="5.8" r="0.8" fill="#2f7a2f" fill-opacity="0.43"/><circle cx="613.1" cy="28.0" r="0.6" fill="#2f7a2f" fill-opacity="0.48"/><circle cx="605.5" cy="19.7" r="0.5" fill="#266a26" fill-opacity="0.6"/><circle cx="629.2" cy="18.3" r="0.5" fill="#3a8a3a" fill-opacity="0.51"/><circle cx="618.2" cy="25.0" r="0.8" fill="#2f7a2f" fill-opacity="0.39"/><circle cx="616.9" cy="13.8" r="0.5" fill="#266a26" fill-opacity="0.31"/><circle cx="619.1" cy="14.2" r="0.8" fill="#3a8a3a" fill-opacity="0.43"/><circle cx="631.1" cy="14.3" r="0.8" fill="#266a26" fill-opacity="0.51"/><circle cx="643.7" cy="4.1" r="0.8" fill="#3a8a3a" fill-opacity="0.49"/><circle cx="616.1" cy="14.1" r="0.5" fill="#2f7a2f" fill-opacity="0.32"/><circle cx="630.2" cy="5.6" r="0.5" fill="#3a8a3a" fill-opacity="0.55"/><circle cx="645.5" cy="2.9" r="0.5" fill="#3a8a3a" fill-opacity="0.39"/><circle cx="614.5" cy="15.7" r="0.6" fill="#266a26" fill-opacity="0.59"/><circle cx="597.4" cy="28.8" r="0.8" fill="#3a8a3a" fill-opacity="0.36"/><circle cx="613.3" cy="13.0" r="0.5" fill="#2f7a2f" fill-opacity="0.42"/></g></svg>
<span class="t" style='left:761.00px;top:353px;color:#ededed;font-size:12.05px;font-family:"DejaVu Sans Condensed","DejaVu Sans",sans-serif;transform:scaleX(0.9245);'>Status</span>
<span class="t" style='left:870.36px;top:355px;color:#3faa3f;font-size:12.05px;font-family:"DejaVu Sans Condensed","DejaVu Sans",sans-serif;'>Self Test</span>
<span class="t" style='left:859.23px;top:381px;color:#3faa3f;font-size:12.19px;font-family:"DejaVu Sans Condensed","DejaVu Sans",sans-serif;transform:scaleX(0.9383);'>Drive Details</span>
<span class="t" style='left:255.86px;top:428px;color:#ededed;font-size:11.99px;font-family:"DejaVu Sans Condensed","DejaVu Sans",sans-serif;transform:scaleX(1.0096);'>HDD</span>
<span class="t" style='left:273.89px;top:453px;color:#ededed;font-size:11.99px;font-family:"DejaVu Sans Condensed","DejaVu Sans",sans-serif;transform:scaleX(0.9792);'>Disk 1</span>
<span class="t" style='left:375.44px;top:455px;color:#ededed;font-size:12.05px;font-family:"DejaVu Sans Condensed","DejaVu Sans",sans-serif;transform:scaleX(1.0217);'>Disk [ 1 ] - IDE</span>
<span class="t" style='left:416.23px;top:481px;color:#ededed;font-size:11.92px;font-family:"DejaVu Sans Condensed","DejaVu Sans",sans-serif;transform:scaleX(1.0212);'>Free</span>
<span class="t" style='left:410.89px;top:511px;color:#ededed;font-size:11.92px;font-family:"DejaVu Sans Condensed","DejaVu Sans",sans-serif;'>0.00 B</span>
<span class="t" style='left:531.46px;top:481px;color:#ededed;font-size:11.92px;font-family:"DejaVu Sans Condensed","DejaVu Sans",sans-serif;transform:scaleX(1.0289);'>Life</span>
<span class="t" style='left:529.85px;top:511px;color:#ededed;font-size:11.92px;font-family:"DejaVu Sans Condensed","DejaVu Sans",sans-serif;transform:scaleX(1.1473);'>N/A</span>
<span class="t" style='left:630.25px;top:481px;color:#ededed;font-size:11.92px;font-family:"DejaVu Sans Condensed","DejaVu Sans",sans-serif;'>Workload</span>
<span class="t" style='left:642.39px;top:511px;color:#ededed;font-size:11.92px;font-family:"DejaVu Sans Condensed","DejaVu Sans",sans-serif;'>0 MB</span>
<span class="t" style='left:752.42px;top:481px;color:#ededed;font-size:11.92px;font-family:"DejaVu Sans Condensed","DejaVu Sans",sans-serif;transform:scaleX(0.9377);'>Status</span>
<span class="t" style='left:859.17px;top:483px;color:#3faa3f;font-size:11.78px;font-family:"DejaVu Sans Condensed","DejaVu Sans",sans-serif;transform:scaleX(1.0255);'>Self Test</span>
<span class="t" style='left:849.04px;top:509px;color:#3faa3f;font-size:11.92px;font-family:"DejaVu Sans Condensed","DejaVu Sans",sans-serif;transform:scaleX(0.9487);'>Drive Details</span>
</div>

<!-- ================= Computer Management window ================= -->
<div class="layer" id="win">
 <div class="a" style="left:-4px;top:-4px;width:720.5px;height:416px;background:#fff;box-shadow:0 1px 4px rgba(0,0,0,.55)"></div>
 <div class="a" style="left:-4px;top:-4px;width:5.3px;height:416px;background:#45626d"></div>
 <!-- content bg -->
 <div class="a" style="left:1.3px;top:55px;width:714.5px;height:357px;background:#f0f0f0"></div>
 <div class="a" style="left:1.3px;top:37.9px;width:714.5px;height:1px;background:#e6e6e6"></div>
 <svg class="a" style="left:6px;top:3.8px" width="12" height="12.4" viewBox="0 0 12 12.4"><rect x="3" y="0.3" width="8.8" height="7" fill="#aeb6de"/><rect x="3.9" y="1.2" width="3.4" height="5" fill="#1f2a96"/><rect x="7.3" y="1.2" width="3.6" height="5" fill="#c6cef2"/><path d="M5 1.2 L7.6 1.2 L8.6 6.2 L6 6.2Z" fill="#1f2a96"/><rect x="6" y="7.3" width="3" height="1.2" fill="#8a92a8"/><rect x="0.4" y="7.8" width="8.6" height="4.2" fill="#5d7186"/><rect x="0.4" y="9.4" width="8.6" height=".8" fill="#b8c4d0"/><rect x="0.4" y="11" width="8.6" height=".6" fill="#93a2b2"/></svg>
<div class="a" style="left:629px;top:10px;width:8.6px;height:1px;background:#8f8f8f"></div>
<div class="a" style="left:661.9px;top:6.3px;width:8px;height:7.8px;border:1px solid #8f8f8f;box-sizing:border-box"></div>
<svg class="a" style="left:694.4px;top:5.8px" width="10" height="10" viewBox="0 0 10 10"><path d="M0.6 0.6 L8.8 8.8 M8.8 0.6 L0.6 8.8" stroke="#8f8f8f" stroke-width="1" fill="none"/></svg>
 <div class="a" style="left:58.2px;top:38.8px;width:16.8px;height:15.8px;background:#cce4f7"></div>
<div class="a" style="left:97px;top:38.8px;width:17px;height:15.8px;background:#cce4f7"></div>
<div class="a" style="left:37.0px;top:40.8px;width:1px;height:12.8px;background:#b4b4b4"></div>
<div class="a" style="left:76.4px;top:40.8px;width:1px;height:12.8px;background:#b4b4b4"></div>
<div class="a" style="left:115.4px;top:40.8px;width:1px;height:12.8px;background:#b4b4b4"></div>
<svg class="a" style="left:4px;top:42.4px" width="13" height="10.6" viewBox="0 0 13 10.6"><path d="M0.3 5.2 L5.6 0.3 L5.6 2.8 L12 2.8 L12 7.6 L5.6 7.6 L5.6 10.2Z" fill="#2f9fe4" stroke="#1f7fc4" stroke-width=".6"/><path d="M3 5.2 L5.8 3.6 L10.8 3.6 L10.8 5.2Z" fill="#8fd0f6"/></svg>
<svg class="a" style="left:20.6px;top:42.4px" width="13" height="10.6" viewBox="0 0 13 10.6"><path d="M12 5.2 L6.7 0.3 L6.7 2.8 L0.4 2.8 L0.4 7.6 L6.7 7.6 L6.7 10.2Z" fill="#8a8a8a" stroke="#6a6a6a" stroke-width=".6"/><path d="M1.4 3.6 L6.8 3.6 L9.4 5.2 L1.4 5.2Z" fill="#b4b4b4"/></svg>
<svg class="a" style="left:43.6px;top:41.6px" width="12.4" height="11.4" viewBox="0 0 12.4 11.4"><path d="M0.4 3.6 L4 3.6 L5 4.8 L11.8 4.8 L11.8 11 L0.4 11Z" fill="#ecd77a" stroke="#c8b050" stroke-width=".6"/><path d="M3.2 7.2 L7.2 2.4 L5.8 1.8 L9.8 0.4 L10 4.4 L8.8 3.4 L5 8.2Z" fill="#4fa63a"/></svg>
<svg class="a" style="left:61px;top:43.2px" width="11.8" height="9.8" viewBox="0 0 11.8 9.8"><rect x="0.4" y="0.4" width="11" height="9" fill="#f4f4f4" stroke="#8a939e" stroke-width=".8"/><rect x="0.8" y="0.8" width="10.2" height="2.2" fill="#a2abb6"/><rect x="1.4" y="4" width="3.6" height="4.6" fill="#fff" stroke="#9aa2ad" stroke-width=".5"/><rect x="6.2" y="4" width="4.4" height="4.6" fill="#fff" stroke="#9aa2ad" stroke-width=".5"/><path d="M6.8 6.3 L9.2 4.6 L9.2 8Z" fill="#3d9a3a"/></svg>
<svg class="a" style="left:100px;top:43.2px" width="11.8" height="9.8" viewBox="0 0 11.8 9.8"><rect x="0.4" y="0.4" width="11" height="9" fill="#f4f4f4" stroke="#8a939e" stroke-width=".8"/><rect x="0.8" y="0.8" width="10.2" height="2.2" fill="#a2abb6"/><rect x="1.4" y="4" width="3.6" height="4.6" fill="#fff" stroke="#9aa2ad" stroke-width=".5"/><rect x="6.2" y="4" width="4.4" height="4.6" fill="#fff" stroke="#9aa2ad" stroke-width=".5"/><path d="M4.6 6.3 L2.2 4.6 L2.2 8Z" fill="#3d9a3a"/></svg>
<svg class="a" style="left:83.4px;top:40.8px" width="9.8" height="12" viewBox="0 0 9.8 12"><rect x="0" y="0" width="9.8" height="12" fill="#2c3f9c"/><rect x="0" y="0" width="2" height="12" fill="#4a5fc0"/><text x="5.3" y="10" font-size="10.5" font-weight="bold" fill="#fff" text-anchor="middle" font-family="Liberation Sans,sans-serif">?</text></svg>
<svg class="a" style="left:122px;top:44.4px" width="11.4" height="8.4" viewBox="0 0 11.4 8.4"><rect x="2.6" y="1.2" width="8.4" height="3.6" rx=".8" fill="#7f8f86"/><rect x="4" y="2" width="3.4" height="1.6" fill="#3d7a3a"/><rect x="8" y="2" width="2" height="1.6" fill="#2a2a2a"/><path d="M0.4 8 L4.6 4.2" stroke="#5f7fa8" stroke-width="1.2"/></svg>
<svg class="a" style="left:139.4px;top:42.4px" width="11" height="9.8" viewBox="0 0 11 9.8"><path d="M1.2 1.2 L9.8 8.6 M9.8 1.2 L1.2 8.6" stroke="#c4101e" stroke-width="2.7" fill="none"/></svg>
<svg class="a" style="left:157px;top:41px" width="9.4" height="11.8" viewBox="0 0 9.4 11.8"><path d="M0.5 0.5 L6.2 0.5 L8.8 3 L8.8 11.2 L0.5 11.2Z" fill="#fff" stroke="#8a8a8a" stroke-width=".8"/><path d="M2.2 6.6 L3.8 8.4 L7.2 4.6" stroke="#d04040" stroke-width="1" fill="none"/></svg>
<svg class="a" style="left:173.2px;top:41.2px" width="12" height="12" viewBox="0 0 12 12"><path d="M0.3 0.3 L7.4 0.3 L9.6 2.2 L9.6 11.4 L0.3 11.4Z" fill="#f6e08a" stroke="#e2c865" stroke-width=".5"/><path d="M7.6 5.4 L11 8.6 L9 8.6 L9 11.6 L6.2 11.6 L6.2 8.6 L4.2 8.6Z" fill="#2e9a2e"/></svg>
<svg class="a" style="left:190.2px;top:41.2px" width="12" height="12" viewBox="0 0 12 12"><path d="M0.3 0.3 L7.4 0.3 L9.2 2.2 L9.2 11.4 L0.3 11.4Z" fill="#f6e08a" stroke="#e2c865" stroke-width=".5"/><circle cx="8.6" cy="6.8" r="2.5" fill="#e9eef2" stroke="#9aa4ad" stroke-width=".9"/><path d="M6.6 8.8 L4 11.4" stroke="#8a7f5a" stroke-width="1.2"/></svg>
<svg class="a" style="left:205px;top:42.8px" width="13" height="9.2" viewBox="0 0 13 9.2"><rect x="0.5" y="0.5" width="11.8" height="8" fill="#f6f8fb" stroke="#7f8a96" stroke-width="1"/><rect x="0.5" y="0.5" width="11.8" height="1.3" fill="#8a95a2"/><rect x="2.2" y="3.2" width="1.6" height="1.4" fill="#5f7fb8"/><rect x="2.2" y="5.8" width="1.6" height="1.4" fill="#5f7fb8"/><rect x="5" y="3.5" width="5.4" height=".8" fill="#b8c0ca"/><rect x="5" y="6.1" width="5.4" height=".8" fill="#b8c0ca"/></svg>
 <!-- tree pane -->
 <div class="a" style="left:2.5px;top:59.3px;width:136px;height:335px;background:#fff;border:1px solid #d9d9d9;border-left-color:#e8e8e8;box-sizing:border-box"></div>
 <div class="a" id="treeclip" style="left:0;top:59px;width:137.6px;height:335px;overflow:hidden"><div class="a" style="left:0;top:-59px;width:300px;height:598px">
  <div class="a" style="left:30.5px;top:178.3px;width:66.5px;height:12.8px;background:#dedede"></div>
<span class="t" style='left:19.15px;top:63px;color:#1c1c1c;font-size:9.71px;font-family:"Liberation Sans",sans-serif;transform:scaleX(0.8765);'>Správa počítače (místní)</span>
<span class="t" style='left:32.95px;top:76px;color:#1c1c1c;font-size:9.71px;font-family:"Liberation Sans",sans-serif;transform:scaleX(0.8822);'>Systémové nástroje</span>
<span class="t" style='left:47.11px;top:89px;color:#1c1c1c;font-size:9.71px;font-family:"Liberation Sans",sans-serif;transform:scaleX(0.8911);'>Plánovač úloh</span>
<span class="t" style='left:47.12px;top:102px;color:#1c1c1c;font-size:9.71px;font-family:"Liberation Sans",sans-serif;transform:scaleX(0.8739);'>Prohlížeč událostí</span>
<span class="t" style='left:47.17px;top:115px;color:#1c1c1c;font-size:9.71px;font-family:"Liberation Sans",sans-serif;transform:scaleX(0.8391);'>Sdílené složky</span>
<span class="t" style='left:47.10px;top:128px;color:#1c1c1c;font-size:9.71px;font-family:"Liberation Sans",sans-serif;transform:scaleX(0.8939);'>Místní uživatelé a skupiny</span>
<span class="t" style='left:47.50px;top:141px;color:#1c1c1c;font-size:9.71px;font-family:"Liberation Sans",sans-serif;transform:scaleX(0.8875);'>Výkon</span>
<span class="t" style='left:47.18px;top:154px;color:#1c1c1c;font-size:9.71px;font-family:"Liberation Sans",sans-serif;transform:scaleX(0.8310);'>Správce zařízení</span>
<span class="t" style='left:32.93px;top:167px;color:#1c1c1c;font-size:9.71px;font-family:"Liberation Sans",sans-serif;transform:scaleX(0.8790);'>Úložiště</span>
<span class="t" style='left:47.16px;top:180px;color:#1c1c1c;font-size:9.71px;font-family:"Liberation Sans",sans-serif;transform:scaleX(0.8593);'>Správa disků</span>
<span class="t" style='left:32.96px;top:193px;color:#1c1c1c;font-size:9.71px;font-family:"Liberation Sans",sans-serif;transform:scaleX(0.8649);'>Služby a aplikace</span>
  <svg class="a" style="left:4.4px;top:61.6px" width="11.4" height="11.4" viewBox="0 0 11.4 11.4"><rect x="2.8" y="0.3" width="8.4" height="6.8" fill="#aeb6de"/><rect x="3.6" y="1.1" width="3.2" height="5" fill="#1f2a96"/><rect x="6.8" y="1.1" width="3.6" height="5" fill="#c6cef2"/><path d="M4.6 1.1 L7.2 1.1 L8.2 6.1 L5.6 6.1Z" fill="#1f2a96"/><rect x="5.6" y="7.1" width="2.8" height="1.2" fill="#8a92a8"/><rect x="0.2" y="7.4" width="8" height="3.8" fill="#5d7186"/><rect x="0.2" y="8.9" width="8" height=".8" fill="#b8c4d0"/></svg>
<svg class="a" style="left:6.8px;top:78.85px" width="6.4" height="4.4" viewBox="0 0 6.4 4.4"><path d="M0.5 0.6 L3.2 3.4 L5.9 0.6" stroke="#3a3a3a" stroke-width="1.15" fill="none"/></svg>
<svg class="a" style="left:19.6px;top:75px" width="9" height="11.4" viewBox="0 0 9 11.4"><path d="M1.6 2.6 Q1.6 0.6 3.2 0.4 L3.2 2.4 L4.2 2.4 L4.2 0.4 Q5.6 0.8 5.4 2.8 L4.4 4 L4.4 10.6 L2.6 10.6 L2.6 4Z" fill="#9aa0a6" stroke="#70767c" stroke-width=".4"/><rect x="6.2" y="0.6" width="1.3" height="4.6" fill="#8f969c"/><path d="M5.6 5.2 L8.2 5.2 L8.4 10.2 Q7 11.4 5.4 10.2Z" fill="#f0c020" stroke="#c89a10" stroke-width=".3"/></svg>
<svg class="a" style="left:21.8px;top:90.9px" width="4.4" height="6" viewBox="0 0 4.4 6"><path d="M0.6 0.4 L3.4 3 L0.6 5.6" stroke="#a0a0a0" stroke-width="1.05" fill="none"/></svg>
<svg class="a" style="left:21.8px;top:103.95000000000002px" width="4.4" height="6" viewBox="0 0 4.4 6"><path d="M0.6 0.4 L3.4 3 L0.6 5.6" stroke="#a0a0a0" stroke-width="1.05" fill="none"/></svg>
<svg class="a" style="left:21.8px;top:117.00000000000001px" width="4.4" height="6" viewBox="0 0 4.4 6"><path d="M0.6 0.4 L3.4 3 L0.6 5.6" stroke="#a0a0a0" stroke-width="1.05" fill="none"/></svg>
<svg class="a" style="left:21.8px;top:130.05px" width="4.4" height="6" viewBox="0 0 4.4 6"><path d="M0.6 0.4 L3.4 3 L0.6 5.6" stroke="#a0a0a0" stroke-width="1.05" fill="none"/></svg>
<svg class="a" style="left:21.8px;top:143.10000000000002px" width="4.4" height="6" viewBox="0 0 4.4 6"><path d="M0.6 0.4 L3.4 3 L0.6 5.6" stroke="#a0a0a0" stroke-width="1.05" fill="none"/></svg>
<svg class="a" style="left:31.6px;top:87.7px" width="12" height="12" viewBox="0 0 12 12"><circle cx="6" cy="6" r="5.4" fill="#eef0f4" stroke="#8f949c" stroke-width="1.1"/><path d="M6 2.4 L6 6.2 L8.8 6.2" stroke="#b89a30" stroke-width="1" fill="none"/></svg>
<svg class="a" style="left:33.2px;top:101.55000000000001px" width="9.6" height="10.6" viewBox="0 0 9.6 10.6"><rect x="0.3" y="0.3" width="9" height="10" fill="#a7b4cc" stroke="#5f6f94" stroke-width=".6"/><rect x="0.3" y="0.3" width="1.8" height="10" fill="#4f63a4"/><rect x="3" y="1.6" width="5.2" height="7.2" fill="#dfe5f0"/><path d="M5.6 2.4 L5.6 6" stroke="#d03030" stroke-width="1.2"/><circle cx="5.4" cy="7.4" r="1.1" fill="#d03030"/></svg>
<svg class="a" style="left:32.2px;top:115.2px" width="10.4" height="9.4" viewBox="0 0 10.4 9.4"><path d="M0.3 1.6 L3.6 1.6 L4.6 0.4 L9.8 0.4 L9.8 9 L0.3 9Z" fill="#e9cf63" stroke="#c4a63c" stroke-width=".5"/><rect x="0.6" y="2.8" width="9" height="6" fill="#f3e08a"/><circle cx="3.6" cy="5" r="1" fill="#3f7f4f"/><circle cx="6.4" cy="5" r="1" fill="#3f5f9f"/><path d="M2.2 8.2 Q3.6 5.4 5 8.2Z" fill="#3f7f4f"/><path d="M5 8.2 Q6.4 5.4 7.8 8.2Z" fill="#3f5f9f"/></svg>
<svg class="a" style="left:32px;top:127.45px" width="12" height="10.8" viewBox="0 0 12 10.8"><circle cx="7.2" cy="2.6" r="2.2" fill="#3f5fb8"/><path d="M3.6 9 Q7.2 2.4 10.8 9Z" fill="#3f5fb8"/><circle cx="3.6" cy="5" r="1.8" fill="#5f9f6a"/><path d="M0.4 10.4 Q3.6 4.8 7 10.4Z" fill="#5f9f6a"/><circle cx="9.6" cy="6.6" r="1.5" fill="#8fb6d8"/><path d="M7 10.6 Q9.6 6.4 11.8 10.6Z" fill="#8fb6d8"/></svg>
<svg class="a" style="left:32.2px;top:140.10000000000002px" width="11.4" height="11.4" viewBox="0 0 11.4 11.4"><circle cx="5.6" cy="5.6" r="4.8" fill="#fff" stroke="#c23a3a" stroke-width="1.2"/><path d="M3 3 L7.6 8" stroke="#c21f1f" stroke-width="1.2"/><path d="M6.2 2.6 L7.8 5.4" stroke="#333" stroke-width=".9"/></svg>
<svg class="a" style="left:32.6px;top:153.15px" width="9.6" height="11.2" viewBox="0 0 9.6 11.2"><rect x="3" y="0.4" width="3.8" height="4.6" fill="#3a3f45"/><rect x="3.6" y="1" width="2.6" height="1" fill="#9aa2aa"/><path d="M4.9 5 L4.9 7 M1.8 8.6 L1.8 7 L8 7 L8 8.6" stroke="#555" stroke-width=".8" fill="none"/><rect x="0.2" y="8" width="3.6" height="2.8" fill="#50565c"/><rect x="5.8" y="8" width="3.6" height="2.8" fill="#50565c"/><rect x="0.8" y="8.6" width="1" height=".8" fill="#e0e0e0"/><rect x="6.4" y="8.6" width="1" height=".8" fill="#e0e0e0"/></svg>
<svg class="a" style="left:7px;top:170.40000000000003px" width="6.4" height="4.4" viewBox="0 0 6.4 4.4"><path d="M0.5 0.6 L3.2 3.4 L5.9 0.6" stroke="#3a3a3a" stroke-width="1.15" fill="none"/></svg>
<svg class="a" style="left:18.4px;top:166.4px" width="11.4" height="10.8" viewBox="0 0 11.4 10.8"><rect x="0.4" y="2.6" width="9.4" height="7.6" rx="1" fill="#c9ced3" stroke="#8f959b" stroke-width=".6"/><rect x="3.4" y="0.4" width="7.6" height="4.4" rx=".8" fill="#3f9fd0"/><rect x="4" y="1" width="6.2" height="1.4" fill="#9fe0f4"/><rect x="1.2" y="6.4" width="7.8" height="1" fill="#f4f6f8"/><rect x="6.6" y="8" width="2.6" height="1.4" fill="#4f9a5a"/></svg>
<svg class="a" style="left:32.2px;top:182.05px" width="11.4" height="7.4" viewBox="0 0 11.4 7.4"><rect x="1.6" y="0.2" width="9.4" height="2.4" fill="#33383d"/><rect x="0.4" y="2.6" width="10.6" height="1.2" fill="#7f868c"/><rect x="0.4" y="3.8" width="4.4" height="3.2" fill="#5a6066"/><rect x="6.4" y="3.8" width="4.4" height="3.2" fill="#5a6066"/><rect x="1.4" y="4.8" width="2.2" height="1.6" fill="#f4f4f4"/><rect x="7.4" y="4.8" width="2.2" height="1.6" fill="#f4f4f4"/></svg>
<svg class="a" style="left:8px;top:195.5px" width="4.4" height="6" viewBox="0 0 4.4 6"><path d="M0.6 0.4 L3.4 3 L0.6 5.6" stroke="#a0a0a0" stroke-width="1.05" fill="none"/></svg>
<svg class="a" style="left:19px;top:192.3px" width="10.8" height="11.4" viewBox="0 0 10.8 11.4"><rect x="0.4" y="0.4" width="5.6" height="10.4" fill="#c3c8ce" stroke="#8c9299" stroke-width=".6"/><rect x="1.2" y="1.6" width="4" height="1" fill="#f0f2f4"/><rect x="1.2" y="3.6" width="4" height="1" fill="#f0f2f4"/><circle cx="7.2" cy="8" r="2.9" fill="#5fa6d6" stroke="#3a7fb0" stroke-width=".6"/><circle cx="7.2" cy="8" r="1.1" fill="#dff0fa"/></svg>
 </div></div>
 <!-- tree h-scrollbar -->
 <div class="a" style="left:3.5px;top:382px;width:134px;height:12.4px;background:#f6f6f6"></div>
 <div class="a" style="left:14.6px;top:382.8px;width:103px;height:10px;background:#cdcdcd"></div>
 <svg class="a" style="left:6px;top:385px" width="4.4" height="6" viewBox="0 0 4.4 6"><path d="M3.6 0.5 L0.9 3 L3.6 5.5" stroke="#444" stroke-width="1.3" fill="none"/></svg><svg class="a" style="left:129.2px;top:385px" width="4.4" height="6" viewBox="0 0 4.4 6"><path d="M0.8 0.5 L3.5 3 L0.8 5.5" stroke="#444" stroke-width="1.3" fill="none"/></svg>

 <!-- list pane -->
 <div class="a" style="left:141px;top:60.2px;width:433px;height:169.3px;background:#fff;border-left:1.2px solid #868686;border-top:1.2px solid #868686;box-sizing:border-box"></div>
 <div class="a" style="left:142.2px;top:61.4px;width:431.8px;height:12.6px;background:linear-gradient(180deg,#fafafa,#ececec)"></div>
 <div class="a" style="left:142.2px;top:73.6px;width:431.8px;height:1.2px;background:#8a8a8a"></div>
 <div class="a" style="left:217px;top:61.4px;width:1.2px;height:12.4px;background:#9a9a9a"></div>
 <div class="a" style="left:271.6px;top:61.4px;width:1.2px;height:12.4px;background:#9a9a9a"></div>
 <div class="a" style="left:313.8px;top:61.4px;width:1.2px;height:12.4px;background:#9a9a9a"></div>
 <div class="a" style="left:384px;top:61.4px;width:1.2px;height:12.4px;background:#9a9a9a"></div>
 <div class="a" style="left:156.5px;top:75.4px;width:20.5px;height:12px;background:#f0f0f0"></div>
 <div class="a" style="left:145px;top:79px;width:9.4px;height:2px;background:#c4c8c4"></div><div class="a" style="left:145px;top:81px;width:9.4px;height:3px;background:#343f36"></div><div class="a" style="left:152px;top:82px;width:1.6px;height:1px;background:#4a9a55"></div>
<div class="a" style="left:145px;top:91px;width:9.4px;height:2px;background:#c4c8c4"></div><div class="a" style="left:145px;top:93px;width:9.4px;height:3px;background:#343f36"></div><div class="a" style="left:152px;top:94px;width:1.6px;height:1px;background:#4a9a55"></div>
<div class="a" style="left:145px;top:104px;width:9.4px;height:2px;background:#c4c8c4"></div><div class="a" style="left:145px;top:106px;width:9.4px;height:3px;background:#343f36"></div><div class="a" style="left:152px;top:107px;width:1.6px;height:1px;background:#4a9a55"></div>
 <!-- list h-scrollbar -->
 <div class="a" style="left:142.2px;top:214.8px;width:431.8px;height:13px;background:#f6f6f6"></div>
 <div class="a" style="left:155px;top:215.6px;width:330px;height:10.4px;background:#cdcdcd"></div>
 <svg class="a" style="left:146.4px;top:217.8px" width="4.4" height="6" viewBox="0 0 4.4 6"><path d="M3.6 0.5 L0.9 3 L3.6 5.5" stroke="#444" stroke-width="1.3" fill="none"/></svg><svg class="a" style="left:565.8px;top:217.8px" width="4.4" height="6" viewBox="0 0 4.4 6"><path d="M0.8 0.5 L3.5 3 L0.8 5.5" stroke="#444" stroke-width="1.3" fill="none"/></svg>

 <!-- lower (graphical) pane -->
 <div class="a" style="left:141px;top:232.4px;width:433px;height:162px;background:#f0f0f0;border-left:1.2px solid #868686;border-top:1.2px solid #868686;box-sizing:border-box"></div>
 <div class="a" style="left:142.2px;top:306.3px;width:420px;height:2px;background:#fff"></div>
 <div class="a" style="left:142.2px;top:378.5px;width:431.8px;height:1.6px;background:#fff"></div>
 <div class="a" style="left:142.2px;top:380.1px;width:431.8px;height:1px;background:#a0a0a0"></div>
 <!-- disk0 partitions -->
 <div class="a" style="left:257px;top:240.8px;width:302px;height:9.6px;background:#000080"></div>
 <div class="a" style="left:257px;top:250.4px;width:82px;height:52.4px;background:#dedede;border:1px solid #9a9a9a;box-sizing:border-box"></div>
 <div class="a" style="left:339.6px;top:250.4px;width:58px;height:52.4px;background:#dedede;border:1px solid #9a9a9a;box-sizing:border-box"></div>
 <div class="a" style="left:398.4px;top:250.4px;width:161.6px;height:52.6px;background:#b4b4b4"></div>
 <div class="a" style="left:400.4px;top:251.4px;width:157.8px;height:48.8px;background:#fff repeating-linear-gradient(135deg,#fff 0,#fff 3.8px,#949494 3.8px,#949494 4.55px)"></div>
 <!-- disk1 -->
 <div class="a" style="left:257.6px;top:313.3px;width:201px;height:8.6px;background:#000"></div>
 <div class="a" style="left:257.6px;top:321.9px;width:203px;height:55.5px;background:#f0f0f0;border:1px solid #b5b5b5;box-sizing:border-box"></div>
 <div class="a" style="left:259.6px;top:325px;width:199px;height:49.5px;background:#fff;border:1px solid #9a9a9a;box-sizing:border-box"></div>
 <!-- v scrollbar -->
 <div class="a" style="left:562.8px;top:233.6px;width:11.2px;height:145px;background:#f4f4f4"></div>
 <div class="a" style="left:564px;top:245px;width:9.4px;height:81.5px;background:#cdcdcd"></div>
 <svg class="a" style="left:565.4px;top:237.6px" width="6" height="4" viewBox="0 0 6 4"><path d="M0.5 3.2 L3 0.7 L5.5 3.2" stroke="#444" stroke-width="1.3" fill="none"/></svg><svg class="a" style="left:565.4px;top:371.2px" width="6" height="4" viewBox="0 0 6 4"><path d="M0.5 0.7 L3 3.2 L5.5 0.7" stroke="#444" stroke-width="1" fill="none"/></svg>
 <div class="a" style="left:573.4px;top:380px;width:1px;height:14px;background:#a8a8a8"></div>
 <div class="a" style="left:142.2px;top:393.2px;width:432px;height:1px;background:#b4b4b4"></div>
 <div class="a" style="left:150.8px;top:243px;width:9.4px;height:2px;background:#c4c8c4"></div><div class="a" style="left:150.8px;top:245px;width:9.4px;height:3px;background:#343f36"></div><div class="a" style="left:157.8px;top:246px;width:1.6px;height:1px;background:#4a9a55"></div>
<svg class="a" style="left:150.4px;top:315.4px" width="11" height="8.4" viewBox="0 0 11 8.4"><circle cx="7" cy="4.2" r="2.6" fill="#fff" stroke="#c01525" stroke-width="2.2"/><path d="M1.2 0.8 L1.2 3 M0.2 1.3 L2.2 2.5 M2.2 1.3 L0.2 2.5" stroke="#8a2030" stroke-width=".7"/></svg>
 <!-- legend -->
 <div class="a" style="left:146.6px;top:383px;width:7.6px;height:8px;background:#000"></div>
 <div class="a" style="left:209px;top:383px;width:7.6px;height:8px;background:#000080"></div>

 <!-- Akce pane -->
 <div class="a" style="left:578px;top:60.2px;width:137px;height:334px;background:#fff;border-left:1.2px solid #868686;border-top:1.2px solid #868686;box-sizing:border-box"></div>
 <div class="a" style="left:579.2px;top:61.4px;width:135.8px;height:13px;background:#f3f3f3;border-bottom:1px solid #c8c8c8;box-sizing:border-box"></div>
 <div class="a" style="left:579.2px;top:76px;width:135.8px;height:18.4px;background:linear-gradient(180deg,#d3e0f0 0%,#b9cde6 45%,#a3bfe0 100%)"></div>
 <svg class="a" style="left:702.4px;top:83.8px" width="8" height="5" viewBox="0 0 8 5"><path d="M0 4.4 L3.7 0.2 L7.4 4.4Z" fill="#000"/></svg>
 <svg class="a" style="left:704.8px;top:100px" width="5" height="8" viewBox="0 0 5 8"><path d="M0.2 0.2 L3.8 3.6 L0.2 7Z" fill="#000"/></svg>

 <!-- status bar -->
 <div class="a" style="left:1.3px;top:394.6px;width:714.5px;height:17.4px;background:#f0f0f0"></div>
 <div class="a" style="left:555px;top:396px;width:1.2px;height:15px;background:#fbfbfb;box-shadow:-1px 0 0 #e2e2e2"></div>
 <div class="a" style="left:652px;top:396px;width:1.2px;height:15px;background:#fbfbfb;box-shadow:-1px 0 0 #e2e2e2"></div>
<span class="t" style='left:21.45px;top:6px;color:#9a9a9a;font-size:9.57px;font-family:"Liberation Sans",sans-serif;transform:scaleX(0.8812);'>Správa počítače</span>
<span class="t" style='left:7.44px;top:25px;color:#1c1c1c;font-size:9.86px;font-family:"Liberation Sans",sans-serif;transform:scaleX(0.8894);'>Soubor</span>
<span class="t" style='left:47.38px;top:25px;color:#1c1c1c;font-size:9.86px;font-family:"Liberation Sans",sans-serif;transform:scaleX(0.8601);'>Akce</span>
<span class="t" style='left:77.80px;top:25px;color:#1c1c1c;font-size:9.86px;font-family:"Liberation Sans",sans-serif;transform:scaleX(0.8781);'>Zobrazit</span>
<span class="t" style='left:120.01px;top:25px;color:#1c1c1c;font-size:9.86px;font-family:"Liberation Sans",sans-serif;transform:scaleX(0.8767);'>Nápověda</span>
<span class="t" style='left:146.39px;top:63px;color:#1c1c1c;font-size:9.42px;font-family:"Liberation Sans",sans-serif;transform:scaleX(0.8328);'>Svazek</span>
<span class="t" style='left:221.80px;top:63px;color:#1c1c1c;font-size:9.42px;font-family:"Liberation Sans",sans-serif;transform:scaleX(0.9024);'>Rozvržení</span>
<span class="t" style='left:277.19px;top:63px;color:#1c1c1c;font-size:9.42px;font-family:"Liberation Sans",sans-serif;transform:scaleX(0.9321);'>Typ</span>
<span class="t" style='left:318.44px;top:63px;color:#1c1c1c;font-size:9.42px;font-family:"Liberation Sans",sans-serif;transform:scaleX(0.9216);'>Systém souborů</span>
<span class="t" style='left:388.86px;top:63px;color:#1c1c1c;font-size:9.42px;font-family:"Liberation Sans",sans-serif;transform:scaleX(0.8862);'>Stav</span>
<span class="t" style='left:159.25px;top:77px;color:#1c1c1c;font-size:9.42px;font-family:"Liberation Sans",sans-serif;transform:scaleX(0.8806);'>(C:)</span>
<span class="t" style='left:156.74px;top:89px;color:#1c1c1c;font-size:9.42px;font-family:"Liberation Sans",sans-serif;transform:scaleX(0.9021);'>(Disk 0 Oddíl 1)</span>
<span class="t" style='left:156.74px;top:101px;color:#1c1c1c;font-size:9.42px;font-family:"Liberation Sans",sans-serif;transform:scaleX(0.9021);'>(Disk 0 Oddíl 2)</span>
<span class="t" style='left:221.44px;top:77px;color:#1c1c1c;font-size:9.42px;font-family:"Liberation Sans",sans-serif;transform:scaleX(0.9288);'>Jednoduchý</span>
<span class="t" style='left:221.44px;top:89px;color:#1c1c1c;font-size:9.42px;font-family:"Liberation Sans",sans-serif;transform:scaleX(0.9288);'>Jednoduchý</span>
<span class="t" style='left:221.44px;top:101px;color:#1c1c1c;font-size:9.42px;font-family:"Liberation Sans",sans-serif;transform:scaleX(0.9288);'>Jednoduchý</span>
<span class="t" style='left:388.74px;top:77px;color:#1c1c1c;font-size:9.42px;font-family:"Liberation Sans",sans-serif;transform:scaleX(1.0336);'>V pořádku (Spouštěcí, Stránkovací soubor,</span>
<span class="t" style='left:582.90px;top:65px;color:#000;font-size:8.7px;font-family:"Liberation Sans",sans-serif;font-weight:bold;transform:scaleX(0.9692);'>Akce</span>
<span class="t" style='left:583.93px;top:82px;color:#16224f;font-size:8.84px;font-family:"Liberation Sans",sans-serif;transform:scaleX(0.9513);'>Správa disků</span>
<span class="t" style='left:601.23px;top:100px;color:#1c1c1c;font-size:8.84px;font-family:"Liberation Sans",sans-serif;transform:scaleX(0.9431);'>Další akce</span>
<span class="t" style='left:162.22px;top:244px;color:#000;font-size:9.28px;font-family:"Liberation Sans",sans-serif;font-weight:bold;transform:scaleX(0.9031);'>Disk 0</span>
<span class="t" style='left:148.81px;top:254px;color:#1c1c1c;font-size:9.42px;font-family:"Liberation Sans",sans-serif;transform:scaleX(0.9181);'>Základní</span>
<span class="t" style='left:148.64px;top:266px;color:#1c1c1c;font-size:9.28px;font-family:"Liberation Sans",sans-serif;transform:scaleX(0.8581);'>232,87 GB</span>
<span class="t" style='left:148.59px;top:276px;color:#1c1c1c;font-size:9.42px;font-family:"Liberation Sans",sans-serif;transform:scaleX(0.9478);'>Online</span>
<span class="t" style='left:162.22px;top:316px;color:#000;font-size:9.28px;font-family:"Liberation Sans",sans-serif;font-weight:bold;transform:scaleX(0.8972);'>Disk 1</span>
<span class="t" style='left:148.38px;top:327px;color:#1c1c1c;font-size:9.28px;font-family:"Liberation Sans",sans-serif;transform:scaleX(0.9257);'>Neznámý</span>
<span class="t" style='left:148.66px;top:338px;color:#1c1c1c;font-size:9.28px;font-family:"Liberation Sans",sans-serif;transform:scaleX(0.8438);'>3,86 GB</span>
<span class="t" style='left:148.37px;top:349px;color:#1c1c1c;font-size:9.28px;font-family:"Liberation Sans",sans-serif;transform:scaleX(0.9500);'>Neinicializováno</span>
<span class="t" style='left:262.66px;top:339px;color:#1c1c1c;font-size:9.28px;font-family:"Liberation Sans",sans-serif;transform:scaleX(0.8378);'>3,86 GB</span>
<span class="t" style='left:262.38px;top:350px;color:#1c1c1c;font-size:9.28px;font-family:"Liberation Sans",sans-serif;transform:scaleX(0.9320);'>Nepřiřazeno</span>
<span class="t" style='left:157.69px;top:383px;color:#1c1c1c;font-size:9.28px;font-family:"Liberation Sans",sans-serif;transform:scaleX(0.9138);'>Nepřiřazeno</span>
<span class="t" style='left:218.76px;top:383px;color:#1c1c1c;font-size:9.28px;font-family:"Liberation Sans",sans-serif;transform:scaleX(0.9568);'>Primární oddíl</span>
<span class="t" style='left:545.32px;top:279px;color:#000;font-size:9.13px;font-family:"Liberation Sans",sans-serif;transform:scaleX(0.7886);background:#fff;'>ací</span>

 <!-- ================= dialog ================= -->
 <div class="a" style="left:256.3px;top:75px;width:290.7px;height:223.3px;background:#f0f0f0;border:1px solid #8c8c8c;box-sizing:border-box;box-shadow:0 2px 7px rgba(0,0,0,.5)"></div>
 <div class="a" style="left:257.3px;top:76px;width:288.7px;height:22px;background:#fff"></div>
 <svg class="a" style="left:531px;top:81.6px" width="9" height="9" viewBox="0 0 9 9"><path d="M0.6 0.6 L8.2 8.2 M8.2 0.6 L0.6 8.2" stroke="#222" stroke-width="1" fill="none"/></svg>
 <div class="a" style="left:264.4px;top:131.2px;width:270px;height:52.5px;background:#fff;border:1px solid #a8a8a8;border-top-color:#7a7a7a;box-sizing:border-box"></div>
 <div class="a" style="left:275.4px;top:133.3px;width:257.6px;height:10.6px;border:1px dotted #555;box-sizing:border-box"></div>
 <div class="a" style="left:267px;top:135.2px;width:7.8px;height:7.6px;background:#fff;border:.9px solid #4a4a4a;box-sizing:border-box"></div>
 <svg class="a" style="left:267px;top:135.2px" width="8" height="8" viewBox="0 0 8 8"><path d="M1.7 3.8 L3.3 5.6 L6.4 1.9" stroke="#000" stroke-width="1.5" fill="none"/></svg>
 <div class="a" style="left:266.8px;top:206.7px;width:9.2px;height:9.2px;border-radius:50%;background:#fff;border:1.2px solid #2a2a2a;box-sizing:border-box"></div>
 <div class="a" style="left:266.8px;top:219.6px;width:9.2px;height:9.2px;border-radius:50%;background:#fff;border:1.2px solid #2a2a2a;box-sizing:border-box"></div>
 <div class="a" style="left:268.9px;top:221.7px;width:5px;height:5px;border-radius:50%;background:#111"></div>
 <div class="a" style="left:421.6px;top:274.4px;width:53.6px;height:15.4px;background:#e3e3e3;border:1.8px solid #2b7dc6;box-sizing:border-box"></div>
 <div class="a" style="left:483px;top:274.4px;width:52.8px;height:15.4px;background:#e1e1e1;border:1px solid #adadad;box-sizing:border-box"></div>
<span class="t" style='left:261.92px;top:83px;color:#000;font-size:9.28px;font-family:"Liberation Sans",sans-serif;transform:scaleX(0.9331);'>Inicializace disku</span>
<span class="t" style='left:264.44px;top:105px;color:#1a1a1a;font-size:9.28px;font-family:"Liberation Sans",sans-serif;transform:scaleX(0.8424);'>Disk musíte inicializovat, aby k němu mohl přistupovat Správce logických disků.</span>
<span class="t" style='left:264.79px;top:120px;color:#1a1a1a;font-size:9.13px;font-family:"Liberation Sans",sans-serif;transform:scaleX(0.8396);'>Vyberte disky:</span>
<span class="t" style='left:277.16px;top:135px;color:#1a1a1a;font-size:8.84px;font-family:"Liberation Sans",sans-serif;transform:scaleX(0.8897);'>Disk 1</span>
<span class="t" style='left:263.95px;top:192px;color:#1a1a1a;font-size:9.13px;font-family:"Liberation Sans",sans-serif;transform:scaleX(0.8603);'>Pro vybrané disky použít typ oddílu:</span>
<span class="t" style='left:278.35px;top:207px;color:#1a1a1a;font-size:9.13px;font-family:"Liberation Sans",sans-serif;transform:scaleX(0.8591);'>Hlavní spouštěcí záznam (MBR)</span>
<span class="t" style='left:278.53px;top:220px;color:#1a1a1a;font-size:9.13px;font-family:"Liberation Sans",sans-serif;transform:scaleX(0.8595);'>GPT (GUID Partition Table - tabulka oddílů GUID)</span>
<span class="t" style='left:263.95px;top:243px;color:#1a1a1a;font-size:9.13px;font-family:"Liberation Sans",sans-serif;transform:scaleX(0.8523);'>Poznámka: Styl oddílu GPT není rozpoznáván všemi předchozími verzemi</span>
<span class="t" style='left:264.14px;top:253px;color:#1a1a1a;font-size:9.13px;font-family:"Liberation Sans",sans-serif;transform:scaleX(0.8585);'>systému Windows.</span>
<span class="t" style='left:442.42px;top:278px;color:#000;font-size:9.13px;font-family:"Liberation Sans",sans-serif;transform:scaleX(0.9093);'>OK</span>
<span class="t" style='left:499.73px;top:278px;color:#000;font-size:9.13px;font-family:"Liberation Sans",sans-serif;transform:scaleX(0.8286);'>Zrušit</span>
</div>
</body></html>
